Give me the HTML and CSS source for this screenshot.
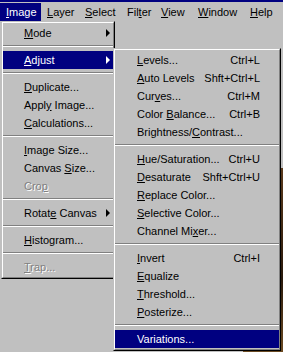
FILE: index.html
```html
<!DOCTYPE html>
<html lang="en">
<head>
  <meta charset="UTF-8" />
  <meta name="viewport" content="width=device-width, initial-scale=1.0"/>
  <title>Image menu</title>
  <link rel="stylesheet" href="styles.css">
</head>
<body>
  <div class="title-edge"></div>
  <div class="menubar">
    <div class="bar-item open" style="width:29px"><u>I</u>mage</div>
    <div class="bar-item" style="width:26px"><u>L</u>ayer</div>
    <div class="bar-item" style="width:30px"><u>S</u>elect</div>
    <div class="bar-item" style="width:22px">Fil<u>t</u>er</div>
    <div class="bar-item" style="width:25px"><u>V</u>iew</div>
    <div class="bar-item" style="width:40px"><u>W</u>indow</div>
    <div class="bar-item"><u>H</u>elp</div>
  </div>

  <div class="doc-window"></div>

  <div class="menu main-menu">
    <div class="menu-body">
      <div class="item"><span><u>M</u>ode</span><i class="arrow"></i></div>
      <div class="sep"></div>
      <div class="item active"><span><u>A</u>djust</span><i class="arrow"></i></div>
      <div class="sep"></div>
      <div class="item"><span><u>D</u>uplicate...</span></div>
      <div class="item"><span>Appl<u>y</u> Image...</span></div>
      <div class="item"><span><u>C</u>alculations...</span></div>
      <div class="sep"></div>
      <div class="item"><span><u>I</u>mage Size...</span></div>
      <div class="item"><span>Canvas <u>S</u>ize...</span></div>
      <div class="item disabled"><span>Cro<u>p</u></span></div>
      <div class="sep"></div>
      <div class="item"><span>Rotat<u>e</u> Canvas</span><i class="arrow"></i></div>
      <div class="sep"></div>
      <div class="item"><span><u>H</u>istogram...</span></div>
      <div class="sep"></div>
      <div class="item disabled"><span><u>T</u>rap...</span></div>
    </div>
  </div>

  <div class="menu sub-menu">
    <div class="menu-body">
      <div class="item"><span><u>L</u>evels...</span><span class="key">Ctrl+L</span></div>
      <div class="item"><span><u>A</u>uto Levels</span><span class="key">Shft+Ctrl+L</span></div>
      <div class="item"><span>Cur<u>v</u>es...</span><span class="key">Ctrl+M</span></div>
      <div class="item"><span>Color <u>B</u>alance...</span><span class="key">Ctrl+B</span></div>
      <div class="item"><span>Brightness/<u>C</u>ontrast...</span></div>
      <div class="sep"></div>
      <div class="item"><span><u>H</u>ue/Saturation...</span><span class="key">Ctrl+U</span></div>
      <div class="item"><span><u>D</u>esaturate</span><span class="key">Shft+Ctrl+U</span></div>
      <div class="item"><span><u>R</u>eplace Color...</span></div>
      <div class="item"><span><u>S</u>elective Color...</span></div>
      <div class="item"><span>Channel Mi<u>x</u>er...</span></div>
      <div class="sep"></div>
      <div class="item"><span><u>I</u>nvert</span><span class="key">Ctrl+I</span></div>
      <div class="item"><span><u>E</u>qualize</span></div>
      <div class="item"><span><u>T</u>hreshold...</span></div>
      <div class="item"><span><u>P</u>osterize...</span></div>
      <div class="sep"></div>
      <div class="item active"><span>Variations...</span></div>
    </div>
  </div>
</body>
</html>
```

FILE: styles.css
```css
body {
  margin: 0;
  width: 283px;
  height: 352px;
  overflow: hidden;
  position: relative;
  background-color: #c0c0c0;
  font-family: "Liberation Sans", Arial, sans-serif;
  font-size: 11px;
  color: #000;
}

u {
  text-decoration-thickness: 1px;
  text-underline-offset: 1px;
}

.title-edge {
  height: 2px;
  background-color: #000080;
}

.menubar {
  display: flex;
  height: 19px;
  padding-top: 1px;
}

.bar-item {
  height: 18px;
  line-height: 18px;
  padding: 0 6px;
}

.bar-item.open {
  background-color: #000080;
  color: #fff;
}

.doc-window {
  position: absolute;
  left: 243px;
  top: 168px;
  width: 40px;
  height: 184px;
  background: linear-gradient(180deg, #5a3a1c, #2a1a0c 60%, #6b4a22);
}

.menu {
  position: absolute;
  border: 1px solid;
  border-color: #c0c0c0 #000 #000 #c0c0c0;
  background-color: #c0c0c0;
}

.menu-body {
  border: 1px solid;
  border-color: #fff #808080 #808080 #fff;
  padding: 1px 0;
}

.main-menu {
  left: 1px;
  top: 21px;
  width: 112px;
}

.sub-menu {
  left: 113px;
  top: 48px;
  width: 166px;
}

.item {
  display: flex;
  align-items: center;
  justify-content: space-between;
  height: 18px;
  line-height: 18px;
  padding-left: 21px;
  white-space: nowrap;
}

.sub-menu .item {
  padding-left: 22px;
  padding-right: 19px;
}

.item.active {
  background-color: #000080;
  color: #fff;
}

.item.disabled {
  color: #808080;
  text-shadow: 1px 1px 0 #fff;
}

.arrow {
  width: 0;
  height: 0;
  margin-right: 3px;
  border-left: 4px solid #000;
  border-top: 4px solid transparent;
  border-bottom: 4px solid transparent;
}

.item.active .arrow {
  border-left-color: #fff;
}

.sep {
  height: 2px;
  margin: 3px 0 4px;
  border-top: 1px solid #808080;
  border-bottom: 1px solid #fff;
  box-sizing: border-box;
}
```
